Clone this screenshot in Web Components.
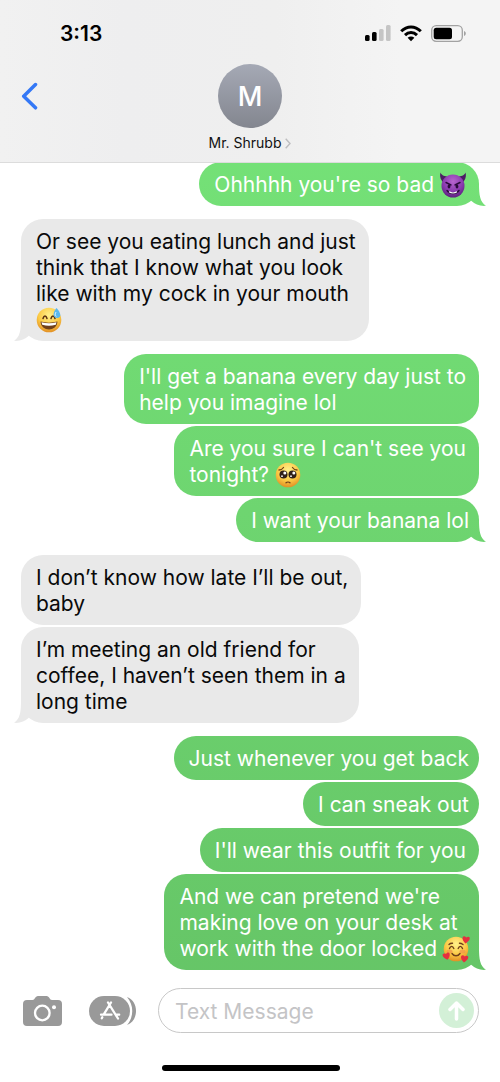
<!DOCTYPE html>
<html lang="en">
<head>
<meta charset="utf-8">
<meta name="viewport" content="width=device-width, initial-scale=1">
<title>Messages</title>
<style>
  html, body { margin: 0; }
  body { background: #fff; color: #0a0a0a; font-family: Inter, "Liberation Sans", sans-serif; }
</style>
</head>
<body>
<messages-app>
  <status-bar slot="header" time="3:13"></status-bar>
  <contact-bar slot="header" initial="M">Mr. Shrubb</contact-bar>
  <message-group from="me">
    <chat-bubble tail roomy>Ohhhhh you're so bad <emoji-icon name="devil"></emoji-icon></chat-bubble>
  </message-group>
  <message-group>
    <chat-bubble tail roomy>Or see you eating lunch and just<br>think that I know what you look<br>like with my cock in your mouth<br><emoji-icon name="sweat"></emoji-icon></chat-bubble>
  </message-group>
  <message-group from="me">
    <chat-bubble roomy>I'll get a banana every day just to<br>help you imagine lol</chat-bubble>
    <chat-bubble roomy>Are you sure I can't see you<br>tonight? <emoji-icon name="plead"></emoji-icon></chat-bubble>
    <chat-bubble tail>I want your banana lol</chat-bubble>
  </message-group>
  <message-group>
    <chat-bubble roomy>I don’t know how late I’ll be out,<br>baby</chat-bubble>
    <chat-bubble tail roomy>I’m meeting an old friend for<br>coffee, I haven’t seen them in a<br>long time</chat-bubble>
  </message-group>
  <message-group from="me">
    <chat-bubble>Just whenever you get back</chat-bubble>
    <chat-bubble>I can sneak out</chat-bubble>
    <chat-bubble roomy>I'll wear this outfit for you</chat-bubble>
    <chat-bubble tail>And we can pretend we're<br>making love on your desk at<br>work with the door locked <emoji-icon name="hearts"></emoji-icon></chat-bubble>
  </message-group>
  <message-composer slot="footer"></message-composer>
</messages-app>

<script>
const define = (name, html, setup) => customElements.define(name, class extends HTMLElement {
  constructor() {
    super();
    this.attachShadow({ mode: "open" }).innerHTML = html;
  }
  connectedCallback() { if (setup) setup(this, this.shadowRoot); }
});

define("messages-app", `
  <style>
    :host { display: flex; flex-direction: column; min-height: 100vh; }
    header { position: relative; z-index: 1; box-sizing: border-box; height: 163px;
      background: linear-gradient(90deg, #f1f1f1, #eeeeef 25%, #efefef 55%, #f4f4f4 80%, #f4f4f4);
      border-bottom: 1px solid #dcdcdc; }
    main { display: flex; flex-direction: column; gap: 13px; margin-top: -1px; padding: 0 21px; flex: 1; }
  </style>
  <header><slot name="header"></slot></header>
  <main><slot></slot></main>
  <slot name="footer"></slot>`);

define("status-bar", `
  <style>
    :host { display: flex; justify-content: space-between; align-items: center; height: 64px; padding: 3px 34px 0 60px; box-sizing: border-box; }
    time { font-size: 21px; line-height: 26px; font-weight: 600; color: #000; }
    .icons { display: flex; align-items: center; gap: 9px; }
    svg { display: block; }
  </style>
  <time></time>
  <div class="icons">
    <svg width="26" height="17" viewBox="0 0 26 17" role="img" aria-label="Signal">
      <rect x="0" y="10" width="4.600" height="6" rx="1.5"/><rect x="7" y="7" width="4.600" height="9" rx="1.5"/>
      <rect x="14" y="4" width="4.600" height="12" rx="1.5" fill="#c5c5c5"/><rect x="21" y="0" width="4.600" height="16" rx="1.5" fill="#c5c5c5"/>
    </svg>
    <svg width="22" height="17" viewBox="0 0 22 17" role="img" aria-label="Wi-Fi" fill="none" stroke="#000" stroke-width="3">
      <path d="M1.2 6.2C7 .5 15 .5 20.800 6.200M5 10.100C8.500 6.700 13.500 6.700 17 10.100"/>
      <path d="M7.600 12.800C9.600 11 12.400 11 14.400 12.800L11 16.200Z" fill="#000" stroke="none"/>
    </svg>
    <svg width="35" height="17" viewBox="0 0 35 17" role="img" aria-label="Battery">
      <rect x=".7" y=".7" width="30.600" height="15.600" rx="4.500" fill="none" stroke="#a2a2a2" stroke-width="1.300"/>
      <rect x="2.700" y="2.700" width="18.300" height="11.600" rx="2.500"/><path d="M33 6C35.400 7 35.400 10 33 11Z" fill="#a2a2a2"/>
    </svg>
  </div>`, (el, root) => { root.querySelector("time").textContent = el.getAttribute("time"); });

define("contact-bar", `
  <style>
    :host { display: grid; grid-template-columns: 64px 1fr 64px; }
    button { border: 0; background: none; padding: 0; font: inherit; color: inherit; cursor: pointer; }
    .back { align-self: start; height: 64px; display: flex; align-items: center; padding-left: 21px; }
    .contact { justify-self: center; display: flex; flex-direction: column; align-items: center; gap: 6px; }
    .avatar { box-sizing: border-box; width: 64px; height: 64px; padding-top: 2px; border-radius: 50%; background: linear-gradient(#a5a9b5, #83868f);
      color: #fff; font-size: 27px; font-weight: 500; line-height: 62px; }
    .name { display: flex; align-items: center; gap: 4px; font-size: 14px; line-height: 18px; color: #111; }
    svg { display: block; }
  </style>
  <button class="back" aria-label="Back"><svg width="18" height="28" viewBox="0 0 18 28" fill="none" stroke="#3478f6" stroke-width="3.500" stroke-linecap="round" stroke-linejoin="round"><path d="M14.500 2.500 2.700 14.200 14.500 25.800"/></svg></button>
  <button class="contact"><span class="avatar"></span><span class="name"><slot></slot><svg width="6" height="11" viewBox="0 0 6 11" fill="none" stroke="#bdbdbf" stroke-width="1.400"><path d="M.7.7 5 5.500.7 10.300"/></svg></span></button>`,
  (el, root) => { root.querySelector(".avatar").textContent = el.getAttribute("initial"); });

define("message-group", `
  <style>
    :host { display: flex; flex-direction: column; align-items: flex-start; gap: 2px; --ink: #0a0a0a; --fill: #e9e9e9; --tail-flip: scaleX(-1); --tail-left: -7px; --tail-right: auto; }
    :host([from="me"]) { align-items: flex-end; --ink: #fff; --fill: linear-gradient(#77e67a, #64c265) fixed; --tail-flip: none; --tail-left: auto; --tail-right: -7px; }
  </style>
  <slot></slot>`);

define("chat-bubble", `
  <style>
    :host { display: block; position: relative; isolation: isolate; padding: 10px 10px 8px 15px; border-radius: 22px;
      background: var(--fill); color: var(--ink); font-size: 21px; line-height: 26px; }
    :host([roomy]) { padding-right: 13px; }
    /* The tail sits behind the text, above the bubble's fill. */
    :host([tail])::after { content: ""; position: absolute; z-index: -1; bottom: 0; left: var(--tail-left); right: var(--tail-right);
      width: 22px; height: 22px; background: var(--fill); transform: var(--tail-flip);
      clip-path: path("M15 0C15 11 16 18 22 21.800C16 22.500 11 20 7.500 17L0 10 8 0Z"); }
  </style>
  <slot></slot>`);

const face = `<defs><radialGradient id="y" cx=".5" cy=".3" r=".72"><stop offset="0" stop-color="#fff08a"/><stop offset=".6" stop-color="#fbc944"/><stop offset="1" stop-color="#e08b22"/></radialGradient><radialGradient id="p" cx=".5" cy=".3" r=".7"><stop offset="0" stop-color="#b765cf"/><stop offset=".6" stop-color="#8b3bb0"/><stop offset="1" stop-color="#5d217f"/></radialGradient></defs>`;
const heart = (x, y, r) => `<path transform="translate(${x} ${y}) rotate(${r})" d="M0 4C-6-.5-3.500-5 0-2 3.500-5 6-.5 0 4Z" fill="#e52f3f"/>`;
const emoji = {
  devil: ["😈", `<path d="M2 9C-.2 6-.2 3 .5.5 2 4 5 4.200 8 4.500L3.500 11ZM24 9C26.200 6 26.200 3 25.500.5 24 4 21 4.200 18 4.500L22.500 11Z" fill="#4b1d63"/><circle cx="13" cy="14" r="11.500" fill="url(#p)"/><g fill="none" stroke="#2a0b3c" stroke-width="1.400" stroke-linecap="round"><path d="M6 10.500 11 13M20 10.500 15 13"/><path d="M7 18.500C10 22.500 16 22.500 19 18.500"/></g><ellipse cx="9" cy="14.500" rx="1.400" ry="2" fill="#2a0b3c"/><ellipse cx="17" cy="14.500" rx="1.400" ry="2" fill="#2a0b3c"/><path d="M9 19.800C11.500 21.300 14.500 21.300 17 19.800" fill="none" stroke="#fff" stroke-width="1.200"/>`],
  sweat: ["😅", `<circle cx="13" cy="13" r="12.300" fill="url(#y)"/><path d="M7 11.500C8 8 10 8 11 11.500M15 11.500C16 8 18 8 19 11.500" fill="none" stroke="#5a3010" stroke-width="1.500" stroke-linecap="round"/><path d="M4.500 14.500C10 16 16 16 21.500 14.500 21 25 5 25 4.500 14.500Z" fill="#70401a"/><path d="M5.500 15.300C10 16.500 16 16.500 20.500 15.300L19.800 17.800C15 19 11 19 6.200 17.800Z" fill="#fff"/><path d="M20.500 1C16.500 6 16.500 10.500 21 11 26 10.500 25 6 20.500 1Z" fill="#59b8ef"/><path d="M20 5C18.500 8 19 9 20.500 9.300" fill="none" stroke="#d8f3ff"/>`],
  plead: ["🥺", `<circle cx="13" cy="13" r="12.300" fill="url(#y)"/><circle cx="8.500" cy="12.500" r="4" fill="#302019"/><circle cx="17.500" cy="12.500" r="4" fill="#302019"/><g fill="#fff"><circle cx="9.800" cy="11" r="1.500"/><circle cx="18.800" cy="11" r="1.500"/><circle cx="7" cy="14.200" r=".9"/><circle cx="16" cy="14.200" r=".9"/></g><path d="M4 8C6 8 7.500 7 8.500 5.500M22 8C20 8 18.500 7 17.500 5.500M11 20.800C12 19.800 14 19.800 15 20.800" fill="none" stroke="#70401a" stroke-width="1.300" stroke-linecap="round"/>`],
  hearts: ["🥰", `<circle cx="13" cy="13" r="12.300" fill="url(#y)"/><ellipse cx="6.500" cy="15.500" rx="3" ry="2" fill="#f08a4a" opacity=".6"/><ellipse cx="19.500" cy="15.500" rx="3" ry="2" fill="#f08a4a" opacity=".6"/><path d="M6.500 12.500C7.500 9.700 9.800 9.700 10.800 12.500M15.200 12.500C16.200 9.700 18.500 9.700 19.500 12.500M9 17.500C11 20.500 15 20.500 17 17.500M6 8.500C7 7.500 8 7.200 9.500 7.300M16.500 7.300C17.500 7.200 18.500 7.500 20 8.500" fill="none" stroke="#70401a" stroke-width="1.400" stroke-linecap="round"/>${heart(23, 3.500, 8)}${heart(3.500, 20, -15)}${heart(21.500, 22.500, 8)}`]
};
define("emoji-icon", `
  <style>
    :host { display: inline-block; width: 26px; height: 26px; vertical-align: top; }
    svg { display: block; overflow: visible; }
  </style>
  <svg width="26" height="26" viewBox="0 0 26 26" role="img"></svg>`, (el, root) => {
  const [label, art] = emoji[el.getAttribute("name")];
  const svg = root.querySelector("svg");
  svg.setAttribute("aria-label", label);
  svg.innerHTML = face + art;
});

define("message-composer", `
  <style>
    :host { display: block; padding: 17px 21px 11px 23px; }
    form { display: flex; align-items: center; }
    button { border: 0; background: none; padding: 0; cursor: pointer; flex: none; }
    svg { display: block; }
    .apps { margin: 0 22px 0 27px; }
    .field { flex: 1; min-width: 0; box-sizing: border-box; height: 45px; display: flex; align-items: center;
      padding: 0 4px 0 16px; border: 1px solid #c8c8c8; border-radius: 23px; }
    input { flex: 1; min-width: 0; border: 0; outline: 0; padding: 2px 0 0; background: none; font: inherit; font-size: 21px; line-height: 26px; }
    input::placeholder { color: #c4c4c6; opacity: 1; }
    .home { width: 178px; height: 6px; margin: 32px auto 0; border-radius: 3px; background: #000; }
  </style>
  <form onsubmit="return false">
    <button type="button" aria-label="Camera"><svg width="39" height="30" viewBox="0 0 39 30"><path d="M4 4H9.500C12 4 12 0 15 0H23.500C26.500 0 26.500 4 29 4H35Q39 4 39 8V26Q39 30 35 30H4Q0 30 0 26V8Q0 4 4 4Z" fill="#999"/><circle cx="19.300" cy="17" r="7.300" fill="none" stroke="#fff" stroke-width="2.300"/><circle cx="31" cy="11.300" r="2" fill="#fff"/></svg></button>
    <button type="button" class="apps" aria-label="Apps"><svg width="47" height="30" viewBox="0 0 47 30"><rect width="41" height="30" rx="15" fill="#999"/><path d="M38 1C50 5 50 25 38 29 45 21 45 9 38 1Z" fill="#999"/><g fill="none" stroke="#fff" stroke-width="2.300" stroke-linecap="round"><path d="M22 6.500 14.800 18.300M19 6.500 29 22.500M12 18.700H22.500M27 18.700H30.200M13.300 21.300 12.800 22.200"/></g></svg></button>
    <div class="field">
      <input type="text" placeholder="Text Message" aria-label="Text Message">
      <button aria-label="Send"><svg width="35" height="35" viewBox="0 0 35 35"><circle cx="17.500" cy="17.500" r="17.500" fill="#d3f0d7"/><path d="M17.500 26V10M11 16.500 17.500 10 24 16.500" fill="none" stroke="#fff" stroke-width="3.500" stroke-linecap="round" stroke-linejoin="round"/></svg></button>
    </div>
  </form>
  <div class="home"></div>`);
</script>
</body>
</html>
